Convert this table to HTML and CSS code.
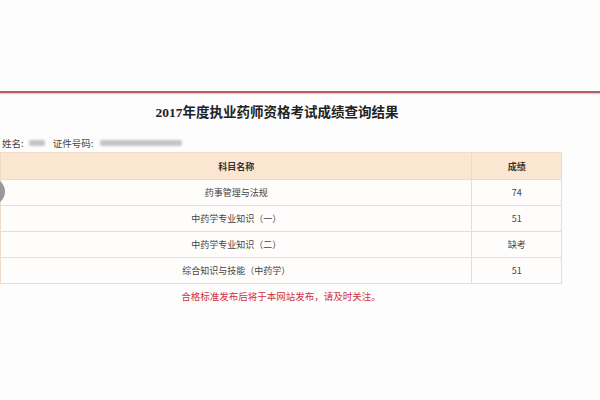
FILE: index.html
```html
<!DOCTYPE html>
<html lang="zh-CN">
<head>
<meta charset="utf-8">
<title>2017年度执业药师资格考试成绩查询结果</title>
<link rel="stylesheet" href="styles.css">
</head>
<body>
<div class="topbar"></div>
<div class="side-btn"></div>
<main class="content">
  <h1 class="title">2017年度执业药师资格考试成绩查询结果</h1>
  <div class="info">
    <span class="label">姓名:</span>
    <span class="blur blur-name"></span>
    <span class="label label-id">证件号码:</span>
    <span class="blur blur-id"></span>
  </div>
  <table class="scores">
    <thead>
      <tr><th class="col-subject">科目名称</th><th class="col-score">成绩</th></tr>
    </thead>
    <tbody>
      <tr><td>药事管理与法规</td><td>74</td></tr>
      <tr><td>中药学专业知识（一）</td><td>51</td></tr>
      <tr><td>中药学专业知识（二）</td><td>缺考</td></tr>
      <tr><td>综合知识与技能（中药学）</td><td>51</td></tr>
    </tbody>
  </table>
  <p class="note">合格标准发布后将于本网站发布，请及时关注。</p>
</main>
</body>
</html>
```
FILE: styles.css
```css
html, body {
  margin: 0;
  padding: 0;
  background: #fdfdfd;
  font-family: "Noto Sans CJK SC", "Noto Sans", sans-serif;
  color: #333;
}
.topbar {
  height: 91px;
  border-bottom: 2px solid #b5606a;
  box-shadow: 0 1px 1px rgba(190, 100, 110, 0.35);
}
.side-btn {
  position: absolute;
  left: -22px;
  top: 178px;
  width: 27px;
  height: 27px;
  border-radius: 50%;
  background: #999;
}
.content {
  width: 562px;
}
.title {
  margin: 11px 0 0;
  padding-right: 8px;
  text-align: center;
  font-family: "Liberation Serif", "Noto Sans CJK SC", serif;
  font-size: 13.5px;
  line-height: 18px;
  font-weight: bold;
  color: #222;
}
.info {
  margin-top: 14px;
  padding-left: 2px;
  height: 14px;
  display: flex;
  align-items: center;
  font-size: 9.5px;
  color: #444;
}
.label-id {
  margin-left: 8px;
}
.blur {
  display: inline-block;
  height: 6px;
  background: #c4c4cb;
  border-radius: 2px;
  filter: blur(1.2px);
  margin-left: 5px;
}
.blur-name {
  width: 16px;
}
.blur-id {
  width: 82px;
  margin-left: 7px;
}
.scores {
  margin-top: 2px;
  width: 562px;
  border-collapse: collapse;
  font-size: 9px;
  color: #444;
}
.scores th, .scores td {
  border: 1px solid #efdcc6;
  text-align: center;
  padding: 0;
}
.scores th {
  height: 26px;
  background: #fbe7d1;
  font-weight: bold;
  color: #333;
}
.scores td {
  height: 25px;
  background: #fefdfb;
}
.scores .col-subject {
  width: 473px;
}
.scores .col-score {
  width: 89px;
}
.note {
  margin: 5px 0 0;
  text-align: center;
  font-size: 9.5px;
  line-height: 14px;
  color: #d0323c;
}
```
